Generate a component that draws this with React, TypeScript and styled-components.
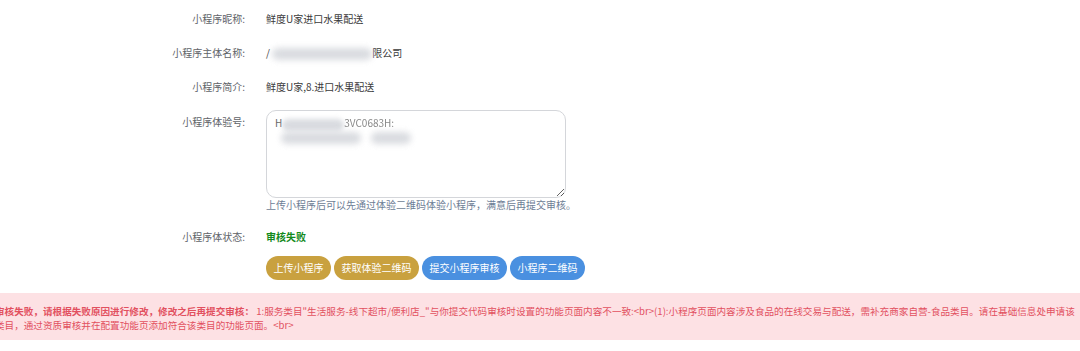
import React from "react";
import styled, { createGlobalStyle } from "styled-components";

const Global = createGlobalStyle`
  html, body { margin: 0; padding: 0; background: #ffffff; }
  body {
    width: 1080px;
    height: 351px;
    overflow: hidden;
    font-family: "Noto Sans CJK SC", "Noto Sans", sans-serif;
    font-size: 10px;
    color: #333333;
  }
`;

const Page = styled.div`
  display: flex;
  flex-direction: column;
  padding-top: 2px;
`;

const Row = styled.div<{ $top?: number; $bottom?: number }>`
  display: flex;
  align-items: flex-start;
  padding: ${(p) => (p.$top ?? 10)}px 0 ${(p) => (p.$bottom ?? 10)}px;
  line-height: 14px;
`;

const Label = styled.div<{ $offset?: number }>`
  width: 245px;
  flex: none;
  text-align: right;
  color: #606368;
  padding-top: ${(p) => p.$offset ?? 0}px;
`;

const Value = styled.div`
  margin-left: 21px;
  display: flex;
  flex-direction: column;
  align-items: flex-start;
  color: #3a3a3a;
`;

const Blur = styled.span<{ $w: number; $r?: number }>`
  display: inline-block;
  width: ${(p) => p.$w}px;
  height: 12px;
  vertical-align: middle;
  background: #cdd0d6;
  border-radius: 6px;
  filter: blur(${(p) => p.$r ?? 3}px);
  opacity: 0.75;
`;

const Faint = styled.span`
  filter: blur(0.7px);
  color: #888;
`;

const TextBox = styled.div`
  box-sizing: border-box;
  width: 300px;
  height: 88px;
  border: 1px solid #d4d6da;
  border-radius: 10px;
  padding: 5px 8px;
  resize: both;
  overflow: auto;
  color: #666;
`;

const BlurLine = styled.div`
  margin-top: 1px;
  margin-left: 6px;
  display: flex;
  gap: 10px;
`;

const Help = styled.div`
  color: #6d7d95;
`;

const Status = styled.span`
  color: #138a1c;
  font-weight: bold;
`;

const Buttons = styled.div`
  display: flex;
  gap: 3px;
  margin-left: 266px;
`;

const Button = styled.button<{ $tone: "gold" | "blue" }>`
  height: 24px;
  padding: 0 7.5px;
  border: none;
  border-radius: 12px;
  font-family: inherit;
  font-size: 10px;
  line-height: 24px;
  color: #ffffff;
  background: ${(p) => (p.$tone === "gold" ? "#c9a13f" : "#4a90e0")};
  cursor: pointer;
`;

const ButtonRow = styled.div`
  padding-top: 5px;
`;

const Alert = styled.div`
  margin: 13px -30px 0 -23px;
  padding: 11px 27px 8px 18px;
  background: #fde1e4;
  color: #e2505f;
  font-size: 9.6px;
  line-height: 14px;
`;

const Strong = styled.b`
  font-weight: bold;
`;

export default function App() {
  return (
    <>
      <Global />
      <Page>
        <Row>
          <Label>小程序昵称:</Label>
          <Value>鲜度U家进口水果配送</Value>
        </Row>
        <Row>
          <Label>小程序主体名称:</Label>
          <Value>
            <span>
              / <Blur $w={100} />限公司
            </span>
          </Value>
        </Row>
        <Row>
          <Label>小程序简介:</Label>
          <Value>鲜度U家,8.进口水果配送</Value>
        </Row>
        <Row $top={6} $bottom={8}>
          <Label $offset={5}>小程序体验号:</Label>
          <Value>
            <TextBox>
              <span>
                H<Blur $w={62} $r={2.5} />
                <Faint>3VC0683H:</Faint>
              </span>
              <BlurLine>
                <Blur $w={80} $r={3} />
                <Blur $w={40} $r={3} />
              </BlurLine>
            </TextBox>
            <Help>上传小程序后可以先通过体验二维码体验小程序，满意后再提交审核。</Help>
          </Value>
        </Row>
        <Row $bottom={7}>
          <Label>小程序体状态:</Label>
          <Value>
            <Status>审核失败</Status>
          </Value>
        </Row>
        <ButtonRow>
          <Buttons>
            <Button $tone="gold">上传小程序</Button>
            <Button $tone="gold">获取体验二维码</Button>
            <Button $tone="blue">提交小程序审核</Button>
            <Button $tone="blue">小程序二维码</Button>
          </Buttons>
        </ButtonRow>
        <Alert>
          <Strong>审核失败，请根据失败原因进行修改，修改之后再提交审核：</Strong>
          {" 1:服务类目\"生活服务-线下超市/便利店_\"与你提交代码审核时设置的功能页面内容不一致:<br>(1):小程序页面内容涉及食品的在线交易与配送，需补充商家自营-食品类目。请在基础信息处申请该类目，通过资质审核并在配置功能页添加符合该类目的功能页面。<br>"}
        </Alert>
      </Page>
    </>
  );
}
